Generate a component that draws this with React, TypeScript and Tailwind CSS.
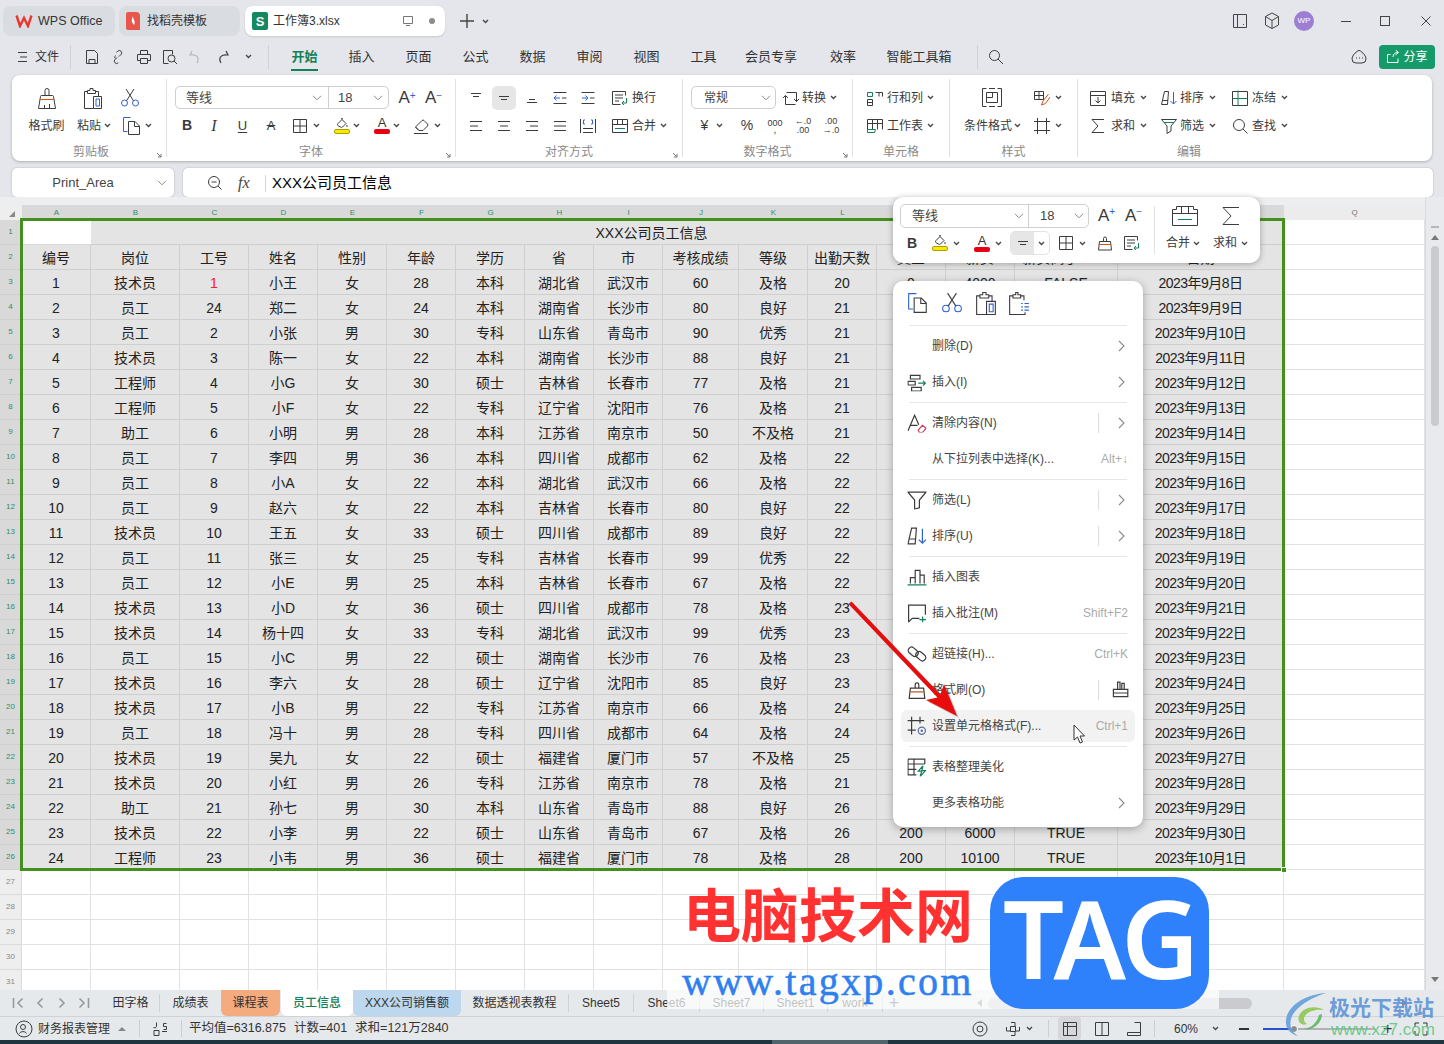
import type { ReactNode } from "react";

// Small svg wrapper, drawing units are screen pixels
function S({ w = 16, h = 16, c = "#3c3c3c", children }: { w?: number; h?: number; c?: string; children: ReactNode }) {
  return (
    <svg width={w} height={h} viewBox={`0 0 ${w} ${h}`} fill="none" stroke={c} strokeWidth="1" className="shrink-0">
      {children}
    </svg>
  );
}

const BLUE = "#2f62d8";
const GREEN = "#128058";

function Chev() {
  return (
    <svg width="7" height="5" viewBox="0 0 7 5" fill="none" stroke="#444" strokeWidth="1.3" className="shrink-0">
      <path d="M1 1l2.5 2.5L6 1" />
    </svg>
  );
}

function SelChev() {
  return (
    <svg width="10" height="6" viewBox="0 0 10 6" fill="none" stroke="#8a8a8a" strokeWidth="1" className="shrink-0">
      <path d="M1 .8l4 4 4-4" />
    </svg>
  );
}

function BrushBig() {
  return (
    <S w={20} h={22}>
      <path d="M8 8.5v-5a2 2 0 0 1 4 0v5" />
      <path d="M4.5 8.5h11a1 1 0 0 1 1 1l2 12h-17l2-12a1 1 0 0 1 1-1z" />
      <path d="M3.5 12.5h13" stroke="#c2571a" />
      <path d="M7.5 21v-3M12.5 21v-4" />
    </S>
  );
}

function BrushSmall() {
  return (
    <S>
      <path d="M6.5 6.5v-3a1.5 1.5 0 0 1 3 0v3" />
      <path d="M2.5 6.5h11l1 8.5h-13z" />
      <path d="M2.5 9.5h11" stroke="#c2571a" />
    </S>
  );
}

function PasteBig() {
  return (
    <S w={22} h={22}>
      <path d="M5.5 4.5h-3v17h9" />
      <path d="M13.5 4.5h3v5" />
      <path d="M5.5 6.5v-3h2.5v-2h3v2h2.5v3z" />
      <path d="M11.5 9.5h8v12h-8z" />
      <path d="M14 12h3.5v7H14z" stroke={BLUE} />
    </S>
  );
}

function PasteSpecial() {
  return (
    <S w={20} h={22}>
      <path d="M4.5 4.5h-3v17h14v-2" />
      <path d="M11.5 4.5h3v4" />
      <path d="M4.5 6.5v-3h2.5v-2h2v2h2.5v3z" />
      <path d="M12 11.5h1.5M15 11.5h4M12 14.5h1.5M15 14.5h4M12 17.5h1.5M15 17.5h4" stroke={BLUE} />
    </S>
  );
}

function Scissors() {
  return (
    <S w={20} h={20}>
      <circle cx="4.5" cy="15" r="3" stroke={BLUE} />
      <circle cx="15.5" cy="15" r="3" stroke={BLUE} />
      <path d="M6.5 12.8 14 1M13.5 12.8 6 1" />
    </S>
  );
}

function Copy() {
  return (
    <S w={20} h={20}>
      <path d="M8.5 1.5h-7v14h4" stroke={BLUE} />
      <path d="M6.5 5.5h6.5l4.5 4.5v8.5h-11z" />
      <path d="M12.5 5.5v5h5" />
    </S>
  );
}

function Bucket() {
  return (
    <div className="flex flex-col items-center w-[16px]">
      <S w={14} h={11}>
        <path d="M3 5.5 7 1.5l4 4-3.5 3.5a1.5 1.5 0 0 1-2 0L3.5 8a1.5 1.5 0 0 1-.5-2.5z" />
        <path d="M6 1a1.5 1.5 0 0 1 2 0M12 7v2" />
      </S>
      <div className="w-[16px] h-[5px] rounded-[2px] bg-[#ffe800] border border-[#a8a000]"></div>
    </div>
  );
}

function FontColor() {
  return (
    <div className="flex flex-col items-center w-[16px] leading-none">
      <span className="text-[13px] leading-[11px] text-[#333]">A</span>
      <div className="w-[16px] h-[5px] rounded-[2px] bg-[#e60012] mt-[1px]"></div>
    </div>
  );
}

function Eraser() {
  return (
    <S w={18} h={16}>
      <path d="M2.5 9 9 2.5a1.4 1.4 0 0 1 2 0l3.5 3.5a1.4 1.4 0 0 1 0 2L10 12.5H6z" />
      <path d="M2.5 9 6 12.5" />
      <path d="M1 15.5h14" />
    </S>
  );
}

function BorderIco() {
  return (
    <S w={14} h={14}>
      <path d="M.5.5h13v13H.5zM7 .5v13M.5 7h13" />
    </S>
  );
}

function Al({ d }: { d: string }) {
  return (
    <S w={14} h={14}>
      <path d={d} />
    </S>
  );
}

function Indent({ out }: { out?: boolean }) {
  return (
    <S w={14} h={14}>
      <path d="M.5 1.5h13M.5 12.5h13" />
      <path d="M9 7h4.5" />
      {out ? <path d="M7 7H1M3.5 4.5 1 7l2.5 2.5" stroke={BLUE} /> : <path d="M1 7h6M4.5 4.5 7 7 4.5 9.5" stroke={BLUE} />}
    </S>
  );
}

function WrapIco() {
  return (
    <S>
      <path d="M.5 1.5h13v4M.5 1.5v13h8" />
      <path d="M3 5h8M3 8h8M3 11h4" />
      <path d="M14.5 8v5h-4M12 11l-2 2 2 2" stroke={GREEN} />
    </S>
  );
}

function MergeIco() {
  return (
    <S>
      <path d="M.5 1.5h15v13H.5zM.5 6.5h15M5.5 1.5v5M10.5 1.5v5" />
      <path d="M3 10.5h10" stroke={GREEN} />
    </S>
  );
}

function Sum({ size = 16 }: { size?: number }) {
  return (
    <S w={size} h={size}>
      <path d={`M${size - 2} 1.5H2l${size / 2 - 2} ${size / 2 - 1.5}L2 ${size - 1.5}h${size - 4}`} />
    </S>
  );
}

function Filter() {
  return (
    <S>
      <path d="M.5 1.5h15L10 8v5l-4 2.5V8z" />
      <path d="M3 4.5h10" stroke={GREEN} />
    </S>
  );
}

function SortIco() {
  return (
    <S>
      <path d="M3.5 1.5h4l-1 13h-6zM2 10.5h5" />
      <path d="M12.5 2v12M9.500 11l3 3 3-3" stroke={BLUE} />
    </S>
  );
}

function Shell({ children }: { children: ReactNode }) {
  return <div className="h-[28px] pt-[1px] flex items-center text-[12px] text-[#3a3a3a]">{children}</div>;
}

function Box({ className, children }: { className: string; children?: ReactNode }) {
  return <div className={`flex items-center justify-center shrink-0 ${className}`}>{children}</div>;
}

function Corner() {
  return (
    <svg width="6" height="6" viewBox="0 0 6 6" className="absolute right-[4px] bottom-[3px]" fill="none" stroke="#777">
      <path d="M1 1l4 4M5 2v3H2" />
    </svg>
  );
}

function Group({ className, label, corner, labelClass, children }: { className: string; label: string; corner?: boolean; labelClass?: string; children: ReactNode }) {
  return (
    <div className={`relative flex flex-col pt-[8px] shrink-0 ${className}`}>
      {children}
      <div className={`h-[20px] mt-[2px] pt-[2px] flex items-center justify-center text-[12px] text-[#8a8a8a] ${labelClass ?? ""}`}>{label}</div>
      {corner && <Corner />}
    </div>
  );
}

function Sep() {
  return <div className="w-px h-[78px] self-center bg-[#e2e2e2] shrink-0"></div>;
}

const menuTabs = ["插入", "页面", "公式", "数据", "审阅", "视图", "工具"];

function Ribbon() {
  return (
    <div className="mx-[12px] h-[86px] w-[1420px] flex rounded-[8px] bg-white shadow-[0_1px_3px_rgba(0,0,0,0.25)]">
      <Group className="w-[154px] pl-0" label="剪贴板" labelClass="pl-[4px]" corner>
        <Shell>
          <Box className="w-[69px]"><BrushBig /></Box>
          <Box className="w-[24px]"><PasteBig /></Box>
          <Box className="w-[50px]"><Scissors /></Box>
        </Shell>
        <Shell>
          <Box className="w-[69px]">格式刷</Box>
          <Box className="-ml-[4px] w-[38px] gap-[3px] justify-start">粘贴<Chev /></Box>
          <Box className="ml-[7px] gap-[3px]"><Copy /><Chev /></Box>
        </Shell>
      </Group>
      <Sep />
      <Group className="w-[288px]" label="字体" corner>
        <Shell>
          <div className="ml-[8px] w-[214px] h-[23px] flex items-center border border-[#cfcfcf] rounded-[5px] text-[13px] text-[#444]">
            <span className="pl-[10px] w-[136px]">等线</span>
            <SelChev />
            <div className="ml-[6px] h-full border-l border-[#cfcfcf] flex-1 flex items-center pl-[9px]">
              <span className="w-[35px]">18</span>
              <SelChev />
            </div>
          </div>
          <Box className="ml-[5px] w-[26px] text-[17px]">A<span className="text-[10px] leading-[10px] self-start mt-[6px] text-[#2f62d8]">+</span></Box>
          <Box className="w-[27px] text-[17px]">A<span className="text-[10px] leading-[10px] self-start mt-[6px] text-[#2f62d8]">−</span></Box>
        </Shell>
        <Shell>
          <Box className="ml-[7px] w-[26px] text-[14px] font-bold">B</Box>
          <Box className="w-[28px] text-[16px] italic font-['Liberation_Serif',serif]">I</Box>
          <Box className="w-[29px] text-[13px] underline underline-offset-2">U</Box>
          <Box className="w-[28px] text-[13px] line-through">A</Box>
          <Box className="w-[42px] gap-[6px]"><BorderIco /><Chev /></Box>
          <Box className="w-[40px] gap-[3px]"><Bucket /><Chev /></Box>
          <Box className="w-[40px] gap-[3px]"><FontColor /><Chev /></Box>
          <Box className="w-[40px] gap-[3px]"><Eraser /><Chev /></Box>
        </Shell>
      </Group>
      <Sep />
      <Group className="w-[226px]" label="对齐方式" corner>
        <Shell>
          <Box className="ml-[6px] w-[28px]"><Al d="M2 2.5h10M4 5.5h6" /></Box>
          <Box className="w-[28px]">
            <div className="w-[24px] h-[24px] rounded-[5px] bg-[#e6e6e6] flex items-center justify-center"><Al d="M2 5.5h10M4 8.5h6" /></div>
          </Box>
          <Box className="w-[28px]"><Al d="M4 8.5h6M2 11.5h10" /></Box>
          <Box className="w-[28px]"><Indent out /></Box>
          <Box className="w-[28px]"><Indent /></Box>
          <div className="ml-[10px] flex items-center gap-[4px]"><WrapIco />换行</div>
        </Shell>
        <Shell>
          <Box className="ml-[6px] w-[28px]"><Al d="M1 2.5h12M1 7h8M1 11.5h12" /></Box>
          <Box className="w-[28px]"><Al d="M1 2.5h12M3 7h8M1 11.5h12" /></Box>
          <Box className="w-[28px]"><Al d="M1 2.5h12M5 7h8M1 11.5h12" /></Box>
          <Box className="w-[28px]"><Al d="M1 2.5h12M1 7h12M1 11.5h12" /></Box>
          <Box className="w-[28px]">
            <S>
              <path d="M.5 1v14M15.5 1v14M3 14.5h10M3 10.5h10" />
              <path d="M5 2H3.5v4H5M11 2h1.5v4H11" stroke={BLUE} />
            </S>
          </Box>
          <div className="ml-[10px] flex items-center gap-[4px]"><MergeIco />合并<span><Chev /></span></div>
        </Shell>
      </Group>
      <Sep />
      <Group className="w-[169px]" label="数字格式" corner>
        <Shell>
          <div className="ml-[8px] w-[85px] h-[23px] flex items-center justify-between px-[12px] pr-[4px] border border-[#cfcfcf] rounded-[5px] text-[#444]">常规<SelChev /></div>
          <div className="ml-[6px]">
            <S w={18}>
              <path d="M4.500 2.500h10v9M12 9l2.500 2.500L17 9M13.500 14.500h-10v-9M1 8l2.500-2.500L6 8" />
            </S>
          </div>
          <span className="ml-[2px]">转换</span>
          <span className="ml-[4px]"><Chev /></span>
        </Shell>
        <Shell>
          <Box className="ml-[8px] w-[42px] gap-[8px] text-[14px]">¥<Chev /></Box>
          <Box className="w-[28px] text-[14px]">%</Box>
          <Box className="w-[28px] flex-col text-[9px] leading-[8px]">000<span className="text-[10px] leading-[6px]">,</span></Box>
          <Box className="w-[28px] flex-col text-[9px] leading-[9px]"><span>←.0</span><span>.00</span></Box>
          <Box className="w-[28px] flex-col text-[9px] leading-[9px]"><span>.00</span><span>→.0</span></Box>
        </Shell>
      </Group>
      <Sep />
      <Group className="w-[96px]" label="单元格">
        <Shell>
          <div className="ml-[14px]">
            <S>
              <path d="M.5 2.500h5v4h-5z" stroke={GREEN} />
              <path d="M8.500 2.500h7v4M12 2.500v4M.5 9.500h5v6h-5zM.5 12.500h5" />
            </S>
          </div>
          <span className="ml-[4px]">行和列</span>
          <span className="ml-[4px]"><Chev /></span>
        </Shell>
        <Shell>
          <div className="ml-[14px]">
            <S>
              <path d="M.5 1.500h15v10M.5 1.500v10M.5 5.500h15M5.500 1.500v10M10.500 1.500v10" />
              <path d="M.5 11.500v3h7l1-3z" stroke={GREEN} />
            </S>
          </div>
          <span className="ml-[4px]">工作表</span>
          <span className="ml-[4px]"><Chev /></span>
        </Shell>
      </Group>
      <Sep />
      <Group className="w-[127px]" label="样式">
        <Shell>
          <Box className="w-[84px]">
            <S w={20} h={21}>
              <path d="M4.500 1.500h-4v18h4M15.500 1.500h4v18h-4M7 1.500h6M7 19.500h6M4.500 5.500h11v10h-11zM4.500 10.500h6M10.500 5.500v5" />
            </S>
          </Box>
          <div className="flex items-center gap-[5px]">
            <S>
              <path d="M.5 1.500h9v8h-9zM5 1.500v8M.5 5.500h9" />
              <path d="M14.500 4 9 11l-1.500 4 4-1.500 5-7" stroke="#c9571c" />
            </S>
            <Chev />
          </div>
        </Shell>
        <Shell>
          <div className="w-[84px] pl-[14px] flex items-center gap-[2px] shrink-0">条件格式<Chev /></div>
          <div className="flex items-center gap-[5px]">
            <S>
              <path d="M3.500 0v16M12.500 0v16M0 3.500h16M0 12.500h16" />
            </S>
            <Chev />
          </div>
        </Shell>
      </Group>
      <Sep />
      <Group className="w-[342px]" label="编辑" labelClass="w-[222px]">
        <Shell>
          <div className="ml-[12px] w-[71px] flex items-center shrink-0">
            <S>
              <path d="M.5 1.500h15v14H.5zM.5 5.500h15" />
              <path d="M8 7v6M5.500 10.500 8 13l2.500-2.500" />
            </S>
            <span className="ml-[5px] mr-[5px]">填充</span>
            <Chev />
          </div>
          <div className="w-[71px] flex items-center shrink-0">
            <SortIco />
            <span className="ml-[3px] mr-[5px]">排序</span>
            <Chev />
          </div>
          <div className="w-[71px] flex items-center shrink-0">
            <S>
              <path d="M.5 1.500h15v14H.5z" />
              <path d="M6 .5v15M.5 8.500h15" stroke={GREEN} />
            </S>
            <span className="ml-[4px] mr-[5px]">冻结</span>
            <Chev />
          </div>
        </Shell>
        <Shell>
          <div className="ml-[12px] w-[71px] flex items-center shrink-0">
            <Sum />
            <span className="ml-[5px] mr-[5px]">求和</span>
            <Chev />
          </div>
          <div className="w-[71px] flex items-center shrink-0">
            <Filter />
            <span className="ml-[3px] mr-[5px]">筛选</span>
            <Chev />
          </div>
          <div className="w-[71px] flex items-center shrink-0">
            <S>
              <circle cx="7" cy="7" r="5.500" />
              <path d="M11 11l4.500 4.500" />
            </S>
            <span className="ml-[4px] mr-[5px]">查找</span>
            <Chev />
          </div>
        </Shell>
      </Group>
    </div>
  );
}

// The grid
const cols = "grid grid-cols-[22px_69px_89px_69px_69px_69px_69px_69px_69px_69px_76px_69px_69px_69px_69px_103px_166px_141px]";
const letters = "ABCDEFGHIJKLMNOP".split("");

const head = "编号 岗位 工号 姓名 性别 年龄 学历 省 市 考核成绩 等级 出勤天数 奖金 薪资 薪资高于5000 日期".split(" ");
// The columns behind the context menu stay empty: "-" means nothing is visible there
const data = [
  "1 技术员 1 小王 女 28 本科 湖北省 武汉市 60 及格 20 0 4000 FALSE 2023年9月8日",
  "2 员工 24 郑二 女 24 本科 湖南省 长沙市 80 良好 21 - - - 2023年9月9日",
  "3 员工 2 小张 男 30 专科 山东省 青岛市 90 优秀 21 - - - 2023年9月10日",
  "4 技术员 3 陈一 女 22 本科 湖南省 长沙市 88 良好 21 - - - 2023年9月11日",
  "5 工程师 4 小G 女 30 硕士 吉林省 长春市 77 及格 21 - - - 2023年9月12日",
  "6 工程师 5 小F 女 22 专科 辽宁省 沈阳市 76 及格 21 - - - 2023年9月13日",
  "7 助工 6 小明 男 28 本科 江苏省 南京市 50 不及格 21 - - - 2023年9月14日",
  "8 员工 7 李四 男 36 本科 四川省 成都市 62 及格 22 - - - 2023年9月15日",
  "9 员工 8 小A 女 22 本科 湖北省 武汉市 66 及格 22 - - - 2023年9月16日",
  "10 员工 9 赵六 女 22 本科 吉林省 长春市 80 良好 22 - - - 2023年9月17日",
  "11 技术员 10 王五 女 33 硕士 四川省 成都市 89 良好 22 - - - 2023年9月18日",
  "12 员工 11 张三 女 25 专科 吉林省 长春市 99 优秀 22 - - - 2023年9月19日",
  "13 员工 12 小E 男 25 本科 吉林省 长春市 67 及格 22 - - - 2023年9月20日",
  "14 技术员 13 小D 女 36 硕士 四川省 成都市 78 及格 23 - - - 2023年9月21日",
  "15 技术员 14 杨十四 女 33 专科 湖北省 武汉市 99 优秀 23 - - - 2023年9月22日",
  "16 员工 15 小C 男 22 硕士 湖南省 长沙市 76 及格 23 - - - 2023年9月23日",
  "17 技术员 16 李六 女 28 硕士 辽宁省 沈阳市 85 良好 23 - - - 2023年9月24日",
  "18 技术员 17 小B 男 22 专科 江苏省 南京市 66 及格 24 - - - 2023年9月25日",
  "19 员工 18 冯十 男 28 专科 四川省 成都市 64 及格 24 - - - 2023年9月26日",
  "20 技术员 19 吴九 女 22 硕士 福建省 厦门市 57 不及格 25 - - - 2023年9月27日",
  "21 技术员 20 小红 男 26 专科 江苏省 南京市 78 及格 21 - - - 2023年9月28日",
  "22 助工 21 孙七 男 30 本科 山东省 青岛市 88 良好 26 - - - 2023年9月29日",
  "23 技术员 22 小李 男 22 硕士 山东省 青岛市 67 及格 26 200 6000 TRUE 2023年9月30日",
  "24 工程师 23 小韦 男 36 硕士 福建省 厦门市 78 及格 28 200 10100 TRUE 2023年10月1日",
].map((r) => r.split(" "));

const selCell = "flex items-center justify-center pt-[3px] bg-[#e4e4e4] border-r border-b border-[#cfcfcf] text-[14px] text-[#222] whitespace-nowrap";
const sheetRowHead = "flex items-center justify-center bg-[#d9d9d9] border-r border-b border-[#cfcfcf] text-[8px] text-[#2c8f6c]";
const blankHead = "flex items-center justify-center bg-[#eeeeee] border-r border-b border-[#dcdcdc] text-[8px] text-[#888]";
const blank = "border-r border-b border-[#e2e2e2] bg-white";

function cellClass(i: number, j: number) {
  if (i === 0 && j === 2) return `${selCell} text-[#ff2020]`;
  if (j === 15) return `${selCell} tracking-[-0.5px]`;
  return selCell;
}

function Sheet() {
  return (
    <div className="relative w-[1425px] h-[793px] overflow-hidden bg-white shrink-0">
      <div className="h-[8px] bg-[#eceef0]"></div>
      <div className={`${cols} h-[15px]`}>
        <div className="relative bg-[#eeeeee]">
          <div className="absolute right-[7px] bottom-[3px] w-0 h-0 border-l-[6px] border-l-transparent border-b-[6px] border-b-[#888]"></div>
        </div>
        {letters.map((l) => (
          <div key={l} className="flex items-center justify-center bg-[#d9d9d9] text-[8px] text-[#2c8f6c]">
            {l}
          </div>
        ))}
        <div className="flex items-center justify-center bg-[#ececec] text-[8px] text-[#777]">Q</div>
      </div>
      <div className={`${cols} auto-rows-[25px]`}>
        <div className={sheetRowHead}>1</div>
        <div className="border-b border-[#d8d8d8] bg-white"></div>
        <div className={`${selCell} col-span-15 pr-[71px]`}>XXX公司员工信息</div>
        <div className={blank}></div>

        <div className={sheetRowHead}>2</div>
        {head.map((h) => (
          <div key={h} className={selCell}>{h}</div>
        ))}
        <div className={blank}></div>

        {data.map((row, i) => (
          <div key={i} className="contents">
            <div className={sheetRowHead}>{i + 3}</div>
            {row.map((v, j) => (
              <div key={j} className={cellClass(i, j)}>{v === "-" ? "" : v}</div>
            ))}
            <div className={blank}></div>
          </div>
        ))}

        {[27, 28, 29, 30, 31].map((n) => (
          <div key={n} className="contents">
            <div className={blankHead}>{n}</div>
            {Array.from({ length: 17 }).map((_, j) => (
              <div key={j} className={blank}></div>
            ))}
          </div>
        ))}
      </div>
      {/* selection frame */}
      <div className="absolute left-[20px] top-[21px] w-[1265px] h-[653px] border-[3px] border-[#43901f] pointer-events-none"></div>
      <div className="absolute left-[1281px] top-[670px] w-[6px] h-[6px] bg-[#43901f] border border-white"></div>
    </div>
  );
}

function VScroll() {
  return (
    <div className="w-[19px] h-[793px] bg-[#e8eaed] border-l border-[#d8dadd] flex flex-col items-center shrink-0">
      <div className="mt-[29px] w-[8px] h-[2px] bg-[#b5b7bb]"></div>
      <div className="mt-[7px] w-0 h-0 border-l-[4px] border-r-[4px] border-b-[5px] border-l-transparent border-r-transparent border-b-[#777]"></div>
      <div className="mt-[6px] w-[8px] h-[180px] rounded-full bg-[#c9cbcf]"></div>
      <div className="mt-auto mb-[8px] w-0 h-0 border-l-[4px] border-r-[4px] border-t-[5px] border-l-transparent border-r-transparent border-t-[#777]"></div>
    </div>
  );
}

function SheetTab({ className, children }: { className: string; children: ReactNode }) {
  return (
    <div className={`h-[26px] flex items-center shrink-0 ${className}`}>
      <div className="w-full h-[18px] flex items-center justify-center border-r border-[#ced1d5]">{children}</div>
    </div>
  );
}

function TabBar() {
  return (
    <div className="h-[27px] bg-[#e6e9ec] border-b border-[#cfd2d6] flex items-start text-[12px] text-[#333]">
      <div className="pl-[7px] flex items-center h-[26px] shrink-0">
        <Box className="w-[22px]">
          <S w={12} h={12} c="#999"><path d="M1.500 1v10M10.500 1.500 6 6l4.500 4.500" strokeWidth="1.6" /></S>
        </Box>
        <Box className="w-[22px]">
          <S w={12} h={12} c="#999"><path d="M8.500 1.500 4 6l4.500 4.500" strokeWidth="1.6" /></S>
        </Box>
        <Box className="w-[22px]">
          <S w={12} h={12} c="#999"><path d="M3.500 1.500 8 6l-4.500 4.500" strokeWidth="1.6" /></S>
        </Box>
        <Box className="w-[22px]">
          <S w={12} h={12} c="#999"><path d="M10.500 1v10M1.500 1.500 6 6l-4.500 4.500" strokeWidth="1.6" /></S>
        </Box>
      </div>
      <SheetTab className="ml-[7px] w-[58px]">田字格</SheetTab>
      <div className="h-[26px] w-[61px] flex items-center justify-center shrink-0">成绩表</div>
      <div className="h-[26px] w-[59px] flex items-center justify-center bg-[#f4ab7e] rounded-b-[6px] shrink-0">课程表</div>
      <div className="h-[26px] w-[72px] ml-px flex items-center justify-center bg-white rounded-b-[6px] text-[#128058] font-medium shrink-0">员工信息</div>
      <div className="h-[26px] w-[108px] flex items-center justify-center bg-[#bdd7ee] rounded-b-[6px] shrink-0">XXX公司销售额</div>
      <SheetTab className="w-[108px]">数据透视表教程</SheetTab>
      <SheetTab className="w-[65px]">Sheet5</SheetTab>
      <SheetTab className="w-[66px]">Sheet6</SheetTab>
      <SheetTab className="w-[64px]">Sheet7</SheetTab>
      <SheetTab className="w-[64px]">Sheet1</SheetTab>
      <SheetTab className="w-[55px]">work</SheetTab>
      <Box className="w-[22px] h-[26px] text-[18px] text-[#555]">+</Box>
      <div className="ml-[72px] h-[26px] flex items-center shrink-0">
        <div className="w-0 h-0 border-t-[4px] border-b-[4px] border-r-[5px] border-t-transparent border-b-transparent border-r-[#888]"></div>
        <div className="ml-[6px] w-[264px] h-[11px] rounded-full bg-[#c9cbcf]"></div>
      </div>
      <div className="ml-[150px] h-[26px] flex items-center shrink-0">
        <div className="w-0 h-0 border-t-[4px] border-b-[4px] border-l-[5px] border-t-transparent border-b-transparent border-l-[#888]"></div>
      </div>
    </div>
  );
}

function StatusBar() {
  return (
    <div className="h-[23px] bg-[#e6e9ec] flex items-center text-[12px] text-[#333]">
      <div className="w-[968px] pl-[15px] flex items-center shrink-0">
        <S w={18} h={18}>
          <circle cx="9" cy="9" r="8" />
          <circle cx="8" cy="7" r="2.500" />
          <path d="M4.500 13.500c1-2.500 6-2.500 7 0" />
        </S>
        <span className="ml-[5px]">财务报表管理</span>
        <div className="ml-[8px] w-0 h-0 border-l-[4px] border-r-[4px] border-b-[4px] border-l-transparent border-r-transparent border-b-[#888]"></div>
        <div className="ml-[13px] w-px h-[17px] bg-[#ccced2]"></div>
        <div className="ml-[12px]">
          <S>
            <path d="M2 9.500h5v5H2zM4.500 1.500v4a2 2 0 0 1-3 1M14.500 2.500h-3v3h3v3h-3M10 10.500h5" />
          </S>
        </div>
        <div className="ml-[13px] w-px h-[17px] bg-[#ccced2]"></div>
        <span className="ml-[7px] text-[12.5px]">平均值=6316.875</span>
        <span className="ml-[8px] text-[12.5px]">计数=401</span>
        <span className="ml-[8px] text-[12.5px]">求和=121万2840</span>
      </div>
      <Box className="w-[24px]">
        <S>
          <circle cx="8" cy="8" r="7" />
          <circle cx="8" cy="8" r="3" />
        </S>
      </Box>
      <Box className="ml-[10px] w-[34px] gap-[5px]">
        <S>
          <path d="M5.500 5.500h5v5h-5zM6 1.500h4v4M6 14.500h4v-4M1.500 6v4h4M14.500 6v4h-4" />
        </S>
        <Chev />
      </Box>
      <div className="ml-[12px] w-px h-[17px] bg-[#ccced2]"></div>
      <Box className="ml-[9px] w-[23px] h-[23px] bg-[#d5d7da] rounded-[3px]">
        <S w={14} h={14}><path d="M.5.5h13v13H.5zM.5 4.500h13M4.500 .5v13" /></S>
      </Box>
      <Box className="ml-[9px] w-[23px]">
        <S w={14} h={14}><path d="M.5.5h13v13H.5zM7 .5v13" /></S>
      </Box>
      <Box className="ml-[9px] w-[23px]">
        <S w={14} h={14}><path d="M7.500.5h6v10H.5v3h13v-3" /></S>
      </Box>
      <div className="ml-[9px] w-px h-[17px] bg-[#ccced2]"></div>
      <span className="ml-[19px] w-[26px]">60%</span>
      <div className="ml-[12px]"><Chev /></div>
      <div className="ml-[20px] w-[10px] h-[2px] bg-[#333]"></div>
      <div className="ml-[14px] relative w-[112px] h-[2px] bg-[#b0b2b6]">
        <div className="w-[30px] h-[2px] bg-[#2352d8]"></div>
        <div className="absolute left-[27px] -top-[3px] w-[8px] h-[8px] rounded-full bg-[#8a8c90] border border-white"></div>
      </div>
      <span className="ml-[8px] text-[16px] leading-[16px]">+</span>
      <div className="ml-[22px]">
        <S w={14} h={14} c="#333"><path d="M1 5V1h4M9 1h4v4M13 9v4H9M5 13H1V9" /></S>
      </div>
    </div>
  );
}

function MenuItem({ icon, label, short, bar, arrow, tail, hover }: { icon?: ReactNode; label: string; short?: string; bar?: boolean; arrow?: boolean; tail?: ReactNode; hover?: boolean }) {
  return (
    <div className="h-[36px] px-[8px] flex items-center">
      <div className={`w-full h-[32px] flex items-center rounded-[6px] ${hover ? "bg-[#f2f2f2]" : ""}`}>
        <div className="w-[31px] pl-[1px] flex items-center justify-center shrink-0 [&>svg]:scale-[1.2]">{icon}</div>
        <span>{label}</span>
        <div className="ml-auto flex items-center">
          {short && <span className="pr-[7px] text-[#aaaaaa]">{short}</span>}
          {bar && <div className="w-px h-[20px] bg-[#dedede]"></div>}
          {arrow && (
            <div className="w-[36px] flex justify-end pr-[10px]">
              <svg width="7" height="12" viewBox="0 0 7 12" fill="none" stroke="#8a8a8a" strokeWidth="1.1">
                <path d="M1 1l5 5-5 5" />
              </svg>
            </div>
          )}
          {tail && <div className="w-[36px] flex justify-end pr-[7px] [&>svg]:scale-[1.2]">{tail}</div>}
        </div>
      </div>
    </div>
  );
}

function Rule() {
  return <div className="mx-[16px] my-[2px] h-px bg-[#e6e6e6]"></div>;
}

function ContextMenu() {
  return (
    <div className="absolute left-[893px] top-[281px] w-[250px] h-[546px] rounded-[10px] bg-white shadow-[0_2px_8px_rgba(0,0,0,0.3)] text-[12px] text-[#444]">
      <div className="h-[44px] flex items-center pl-[15px]">
        <Box className="w-[20px] [&>svg]:scale-110"><Copy /></Box>
        <Box className="ml-[14px] w-[20px] [&>svg]:scale-110"><Scissors /></Box>
        <Box className="ml-[13px] w-[22px] [&>svg]:scale-110"><PasteBig /></Box>
        <Box className="ml-[12px] w-[20px] [&>svg]:scale-110"><PasteSpecial /></Box>
      </div>
      <div className="mx-[16px] mb-[2px] h-px bg-[#e6e6e6]"></div>
      <MenuItem label="删除(D)" arrow />
      <MenuItem
        label="插入(I)"
        arrow
        icon={
          <S>
            <path d="M2.500 2.500h8v3h-8zM.5 7.500h6v3h-6zM3.500 12.500h8v3h-8z" />
            <path d="M9 9h6M13 7l2 2-2 2" stroke={GREEN} />
          </S>
        }
      />
      <Rule />
      <MenuItem
        label="清除内容(N)"
        bar
        arrow
        icon={
          <S>
            <path d="M.5 14.500 6 1.500l3.500 8M2.500 10h6" />
            <path d="m9 14 3.500-4 3 2.500-3 3.500H10z" stroke="#d3395a" />
          </S>
        }
      />
      <MenuItem label="从下拉列表中选择(K)..." short="Alt+↓" />
      <Rule />
      <MenuItem label="筛选(L)" bar arrow icon={<S><path d="M.5 1.500h15L10 8v6.500l-4 1V8z" /></S>} />
      <MenuItem label="排序(U)" bar arrow icon={<SortIco />} />
      <Rule />
      <MenuItem
        label="插入图表"
        icon={
          <S>
            <path d="M2.500 13.500v-5h4v5M6.500 13.500V2.500h4v11M10.500 13.500v-7h3.500v7" />
            <path d="M0 14.500h16" stroke={GREEN} />
          </S>
        }
      />
      <MenuItem
        label="插入批注(M)"
        short="Shift+F2"
        icon={
          <S>
            <path d="M10 12.500H4l-3 3V1.500h14v8" />
            <path d="M10 13.500h5.500M12.700 11v5" stroke={GREEN} />
          </S>
        }
      />
      <Rule />
      <MenuItem
        label="超链接(H)..."
        short="Ctrl+K"
        icon={
          <S>
            <rect x="0.5" y="3.500" width="9" height="5.500" rx="2.700" transform="rotate(40 5 6)" />
            <rect x="6.500" y="7" width="9" height="5.500" rx="2.700" transform="rotate(40 11 10)" />
          </S>
        }
      />
      <MenuItem
        label="格式刷(O)"
        icon={<BrushSmall />}
        bar
        tail={
          <S>
            <path d="M6 7.500V1.500h2v6M9.500 7.500V2.500h2v5" />
            <path d="M2.500 7.500h12v6h-12zM2.500 10.500h12" />
          </S>
        }
      />
      <MenuItem
        hover
        label="设置单元格格式(F)..."
        short="Ctrl+1"
        icon={
          <S>
            <path d="M3.500 0v15M10.500 0v6M0 3.500h14M0 11.500h7" />
            <circle cx="12" cy="12" r="3" stroke="#5a6e9c" />
            <circle cx="12" cy="12" r="1" fill="#5a6e9c" stroke="none" />
          </S>
        }
      />
      <Rule />
      <MenuItem
        label="表格整理美化"
        icon={
          <S>
            <path d="M.5 1.500h14v4M.5 1.500v13h7M.5 5.500h14M.5 10h7M5.500 1.500v13" />
            <path d="M13 7l-4 4.500h3L10.500 16l4.500-5h-3z" stroke={GREEN} />
          </S>
        }
      />
      <MenuItem label="更多表格功能" arrow />
    </div>
  );
}

function MiniToolbar() {
  return (
    <div className="absolute left-[893px] top-[197px] w-[367px] h-[66px] flex rounded-[10px] bg-white shadow-[0_1px_6px_rgba(0,0,0,0.3)] text-[12px] text-[#3a3a3a]">
      <div className="w-[261px] pl-[7px] pt-[7px] shrink-0">
        <div className="h-[24px] flex items-center">
          <div className="w-[189px] h-[24px] flex items-center border border-[#cfcfcf] rounded-[5px] text-[13px] text-[#444]">
            <span className="pl-[11px] w-[113px]">等线</span>
            <SelChev />
            <div className="ml-[4px] h-full border-l border-[#cfcfcf] flex-1 flex items-center pl-[11px]">
              <span className="w-[34px]">18</span>
              <SelChev />
            </div>
          </div>
          <Box className="ml-[4px] w-[27px] text-[17px]">A<span className="text-[10px] leading-[10px] self-start mt-[4px] text-[#2f62d8]">+</span></Box>
          <Box className="w-[27px] text-[17px]">A<span className="text-[10px] leading-[10px] self-start mt-[4px] text-[#2f62d8]">−</span></Box>
        </div>
        <div className="mt-[3px] h-[24px] flex items-center">
          <Box className="w-[24px] text-[14px] font-bold">B</Box>
          <div className="ml-[8px]"><Bucket /></div>
          <div className="ml-[5px]"><Chev /></div>
          <div className="ml-[14px]"><FontColor /></div>
          <div className="ml-[5px]"><Chev /></div>
          <div className="ml-[8px] w-[40px] h-[24px] flex border border-[#e2e2e2] rounded-[5px] shrink-0 overflow-hidden">
            <Box className="w-[23px] bg-[#e6e6e6]"><Al d="M2 5.500h10M4 8.500h6" /></Box>
            <Box className="flex-1"><Chev /></Box>
          </div>
          <div className="ml-[8px]"><S><path d="M1.500 1.500h13v13h-13zM8 1.500v13M1.500 8h13" /></S></div>
          <div className="ml-[5px]"><Chev /></div>
          <div className="ml-[11px]"><BrushSmall /></div>
          <div className="ml-[11px]"><WrapIco /></div>
        </div>
      </div>
      <div className="mt-[9px] w-px h-[48px] bg-[#e2e2e2] shrink-0"></div>
      <div className="flex flex-col">
        <div className="mt-[7px] h-[24px] flex items-center">
          <div className="ml-[16px]">
            <S w={28} h={20}>
              <path d="M5.500 .5h17v3h4v16h-25v-16h4zM1.500 7.500h25M10.500 .5v7M17.500 .5v7" />
              <path d="M7 13.500h14" stroke={GREEN} />
            </S>
          </div>
          <div className="ml-[22px]"><Sum size={20} /></div>
        </div>
        <div className="mt-[3px] h-[24px] flex items-center">
          <span className="ml-[11px]">合并</span>
          <span className="ml-[3px]"><Chev /></span>
          <span className="ml-[13px]">求和</span>
          <span className="ml-[4px]"><Chev /></span>
        </div>
      </div>
    </div>
  );
}

export default function App() {
  return (
    <div className="relative w-[1444px] h-[1044px] overflow-hidden bg-[#e4e6eb] font-['Liberation_Sans','Noto_Sans_CJK_SC',sans-serif]">
      {/* window tabs */}
      <div className="h-[38px] pt-[6px] pl-[3px] flex text-[12px] text-[#333]">
        <div className="w-[112px] h-[30px] pl-[12px] flex items-center gap-[5px] rounded-[8px] bg-[#d9dce1] text-[12.500px]">
          <svg width="18" height="14" viewBox="0 0 18 14" fill="none" stroke="#e8362d" strokeWidth="2.400"><path d="M1.500 1.500 5 12l4-8 4 8 3.500-10.500" /></svg>
          WPS Office
        </div>
        <div className="ml-[4px] w-[121px] h-[30px] pl-[7px] flex items-center gap-[7px] rounded-[8px] bg-[#d9dce1] text-[12px]">
          <svg width="14" height="18" viewBox="0 0 14 18"><path d="M2 0h8a4 4 0 0 1 4 4v14H2a2 2 0 0 1-2-2V2a2 2 0 0 1 2-2z" fill="#e8574d" /><path d="M7 4c0 4 3 5 1 9-1-2-3-3-2-6" fill="#fff" /></svg>
          找稻壳模板
        </div>
        <div className="ml-[5px] w-[200px] h-[30px] pl-[7px] pr-[10px] flex items-center rounded-[8px] bg-white shadow-[0_1px_2px_rgba(0,0,0,0.12)] text-[12px]">
          <div className="w-[16px] h-[18px] rounded-[2px] bg-[#14885f] flex items-center justify-center text-white text-[13px] font-bold leading-none">S</div>
          <span className="ml-[5px]">工作簿3.xlsx</span>
          <div className="ml-auto"><S w={12} h={12} c="#777"><path d="M1.500 1.500h9v7h-9zM4 10.500h4" /></S></div>
          <div className="ml-[15px] w-[6px] h-[6px] rounded-full bg-[#8c8c8c]"></div>
        </div>
        <div className="ml-[14px] h-[30px] flex items-center gap-[7px]">
          <S w={16} h={16} c="#444"><path d="M8 1v14M1 8h14" strokeWidth="1.400" /></S>
          <Chev />
        </div>
        <div className="ml-auto h-[30px] flex items-center">
          <S w={16} h={16} c="#444"><path d="M1.500 1.500h13v13h-13zM5.500 1.500v13M11 11.500h1" /></S>
          <div className="ml-[16px]"><S w={16} h={18} c="#444"><path d="M8 1l6.500 3.500v8.500L8 16.500 1.500 13V4.500zM1.500 4.500 8 8.500l6.500-4M8 8.500v8" /></S></div>
          <div className="ml-[14px] w-[20px] h-[20px] rounded-full bg-[#9b7fd4] flex items-center justify-center text-[8px] text-white">WP</div>
          <div className="ml-[27px] w-[10px] h-px bg-[#444]"></div>
          <div className="ml-[29px] w-[10px] h-[10px] border border-[#444]"></div>
          <div className="ml-[31px] mr-[13px]"><S w={10} h={10} c="#444"><path d="M.5.5l9 9M9.500.5l-9 9" /></S></div>
        </div>
      </div>

      {/* menu row */}
      <div className="h-[37px] pl-[15px] flex items-center text-[13px] text-[#333]">
        <Box className="w-[16px]"><S w={10} h={10}><path d="M0 .5h9M2 5h7M0 9.500h9" /></S></Box>
        <Box className="ml-[2px] w-[28px] text-[12px]">文件</Box>
        <div className="w-[18px] flex justify-center shrink-0"><div className="w-px h-[24px] bg-[#cfd1d5]"></div></div>
        <Box className="w-[26px]"><S><path d="M2.500 1.500h8l3 3v10h-11zM5 14.500v-4h6v4" /></S></Box>
        <Box className="w-[26px]"><S><path d="M7 8.500 5 10.500a2.300 2.300 0 0 0 3.300 3.300M9 7.500l2-2a2.300 2.300 0 0 0-3.300-3.300L6.500 3.500M5.500 9.500c-1-1-1-2 0-3" /></S></Box>
        <Box className="w-[26px]"><S><path d="M4.500 5.500v-4h7v4M4.500 11.500h-3v-6h13v6h-3M4.500 9.500h7v5h-7z" /></S></Box>
        <Box className="w-[26px]"><S><path d="M6.500 14.500h-5v-13h9v4" /><circle cx="9.500" cy="9.500" r="3.500" /><path d="M12 12l3 3" /></S></Box>
        <Box className="w-[26px]"><S c="#b5b7bb"><path d="M4 2 2 6h4.500M2.500 6c5-1 10 2 6.500 8" strokeWidth="1.200" /></S></Box>
        <Box className="w-[26px]"><S><path d="M12 2l2 4H9.500M13.500 6c-5-1-10 2-6.500 8" strokeWidth="1.200" /></S></Box>
        <Box className="w-[26px]"><Chev /></Box>
        <div className="w-[15px] flex justify-center shrink-0"><div className="w-px h-[24px] bg-[#cfd1d5]"></div></div>
        <Box className="w-[57px]">
          <div className="h-[28px] pt-[2px] flex items-center border-b-[2px] border-[#128058] text-[#128058] font-bold">开始</div>
        </Box>
        {menuTabs.map((t) => (
          <Box key={t} className="w-[57px]">{t}</Box>
        ))}
        <Box className="w-[78px]">会员专享</Box>
        <Box className="w-[66px]">效率</Box>
        <Box className="w-[86px]">智能工具箱</Box>
        <div className="ml-[15px] w-px h-[24px] bg-[#cfd1d5] shrink-0"></div>
        <Box className="ml-[6px] w-[24px]"><S><circle cx="6.500" cy="6.500" r="5" /><path d="M10 10l5 5" /></S></Box>
        <div className="ml-auto mr-[9px] flex items-center">
          <Box className="w-[24px] mr-[8px]">
            <S w={16} h={16}><path d="M6 2.500a2.500 2.500 0 0 1 4 0c3 2 5 5 5 7.500a4 4 0 0 1-4 4H5a4 4 0 0 1-4-4c0-2.500 2-5.500 5-7.500z" /><path d="M5 9h1M8 9h1M11 9h1" /></S>
          </Box>
          <div className="w-[56px] h-[24px] rounded-[4px] bg-[#149b69] flex items-center justify-center gap-[3px] text-white text-[12px]">
            <S w={14} h={14} c="#fff"><path d="M12 8.500v4H1.500v-8h3M7 7c0-3 2-4.500 5-4.500M9.500 0 12.500 2.500 9.500 5" /></S>
            分享
          </div>
        </div>
      </div>

      <Ribbon />

      {/* name box and formula bar */}
      <div className="mt-[7px] h-[29px] mx-[12px] flex gap-[9px]">
        <div className="w-[162px] pt-[1px] flex items-center justify-center relative rounded-[5px] bg-white shadow-[0_0_2px_rgba(0,0,0,0.25)] text-[13px] text-[#444] shrink-0">
          <span className="pr-[20px]">Print_Area</span>
          <div className="absolute right-[7px] top-[12px]"><SelChev /></div>
        </div>
        <div className="w-[1250px] pt-[1px] flex items-center rounded-[5px] bg-white shadow-[0_0_2px_rgba(0,0,0,0.25)] shrink-0">
          <div className="ml-[24px]">
            <S><circle cx="7" cy="7" r="5.500" /><path d="M11 11l3.500 3.500M4.500 7h5" /></S>
          </div>
          <span className="ml-[15px] w-[24px] text-[16px] italic font-['Liberation_Serif',serif] text-[#444]">fx</span>
          <div className="ml-[3px] w-px h-[17px] bg-[#d5d5d5]"></div>
          <span className="ml-[6px] text-[15px] text-black">XXX公司员工信息</span>
        </div>
      </div>

      {/* sheet */}
      <div className="flex h-[793px]">
        <Sheet />
        <VScroll />
      </div>
      <TabBar />
      <StatusBar />
      <div className="h-[4px] bg-[#1f3540] flex">
        <div className="ml-[772px] w-[116px] h-full bg-[#52646b]"></div>
      </div>

      <MiniToolbar />
      <ContextMenu />

      {/* annotation arrow */}
      <svg width="125" height="128" viewBox="0 0 125 128" className="absolute left-[845px] top-[598px]">
        <polygon points="6.500,3.500 95.500,96.600 99,86 112,118 81,102 92.500,99.400 3.500,6" fill="#000" opacity="0.2" transform="translate(2 2)" />
        <polygon points="6.500,3.500 95.500,96.600 99,86 112,118 81,102 92.500,99.400 3.500,6" fill="#e80c0c" />
      </svg>

      {/* mouse pointer */}
      <svg width="14" height="21" viewBox="0 0 14 21" className="absolute left-[1073px] top-[724px]">
        <polygon points="1,1 1,16 4.500,13 7,19 9.500,18 7,12 11.500,12" fill="#fff" stroke="#333" strokeWidth="1" />
      </svg>

      {/* site watermarks */}
      <div className="absolute left-[667px] top-[990px] w-[552px] h-[19px] bg-white/70"></div>
      <div className="absolute left-[683px] top-[882px] text-[58px] leading-[60px] font-bold text-[#ff3131] font-['Noto_Sans_CJK_SC',sans-serif] whitespace-nowrap">电脑技术网</div>
      <div className="absolute left-[682px] top-[958px] text-[40px] leading-[48px] tracking-[2.300px] text-[#2f80ee] [-webkit-text-stroke:0.5px_#2f80ee] font-['Liberation_Serif',serif] whitespace-nowrap">www.tagxp.com</div>
      <div className="absolute left-[990px] top-[877px] w-[219px] h-[132px] pb-[10px] rounded-[34px] bg-[#2e80fb] flex items-center justify-center text-white text-[108px] leading-none font-semibold tracking-[-3px] font-['Noto_Sans',sans-serif]">TAG</div>

      <svg width="44" height="46" viewBox="0 0 44 46" className="absolute left-[1284px] top-[992px]">
        <path d="M42 1C24 2 4 12 2 28c-1 8 4 14 12 16-6-4-9-10-7-17C10 16 26 6 42 1z" fill="#5b9ad6" opacity="0.85" />
        <path d="M40 18c-8-5-22-3-25 6-2 6 3 10 8 8-3-2-4-5-2-8 3-5 11-7 19-6z" fill="#8bc34a" opacity="0.85" />
        <path d="M38 22c0 9-9 17-18 15 7-1 13-6 15-14z" fill="#4caf50" opacity="0.8" />
      </svg>
      <div className="absolute left-[1329px] top-[993px] text-[21px] leading-[26px] font-bold text-[#5b93d6]/90 font-['Noto_Sans_CJK_SC',sans-serif] whitespace-nowrap">极光下载站</div>
      <div className="absolute left-[1331px] top-[1019px] text-[17px] leading-[22px] text-[#5fc47e]/90 whitespace-nowrap">www.xz7.com</div>
    </div>
  );
}
